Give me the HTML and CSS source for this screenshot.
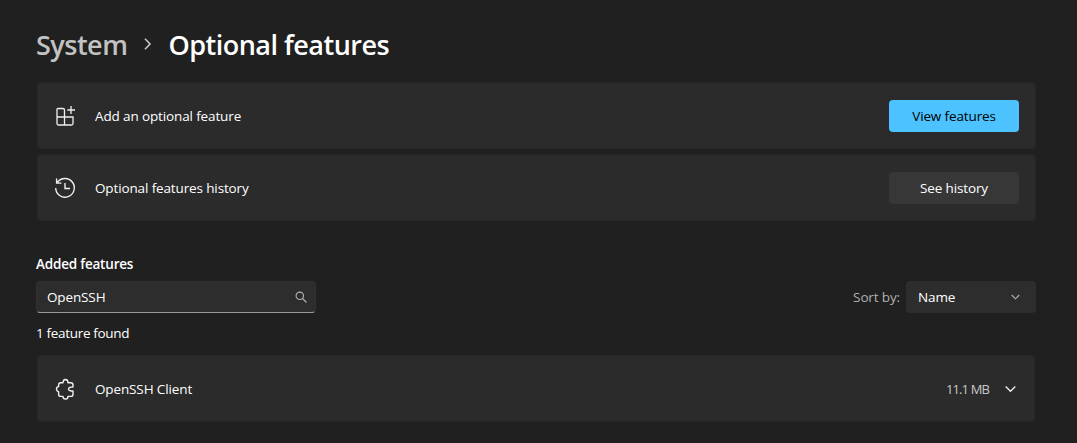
FILE: index.html
```html
<!DOCTYPE html>
<html lang="en">
<head>
<meta charset="utf-8">
<title>Optional features</title>
<link rel="stylesheet" href="styles.css">
</head>
<body>
<main class="page">
  <header class="crumbs">
    <span class="crumb-parent">System</span>
    <svg class="crumb-sep" width="12" height="14" viewBox="0 0 12 14"><path d="M3 1.800 8 7l-5 5.200" fill="none" stroke="#c8c8c8" stroke-width="1.600"/></svg>
    <span class="crumb-current">Optional features</span>
  </header>
  <section class="cards">
    <div class="card">
      <svg class="card-icon" width="22" height="22" viewBox="0 0 22 22" fill="none" stroke="#f0f0f0" stroke-width="1.300"><path d="M3.500 3.500h4.500a1.500 1.500 0 0 1 1.500 1.500v7h-7.500V4.500a1 1 0 0 1 1-1ZM9.500 12h8.500v6.500a1.500 1.500 0 0 1-1.500 1.500h-7ZM2 12h7.500v8H3.500A1.500 1.500 0 0 1 2 18.500ZM16 1v8M12.300 5h7.700"/></svg>
      <span class="card-title">Add an optional feature</span>
      <button class="btn btn-accent">View features</button>
    </div>
    <div class="card">
      <svg class="card-icon" width="22" height="22" viewBox="0 0 22 22" fill="none" stroke="#f0f0f0" stroke-width="1.400"><path d="M2.400 5.500A9.300 9.300 0 1 1 .7 11M1.600 1.500v4.600h4.800M10 6v5.500h5"/></svg>
      <span class="card-title">Optional features history</span>
      <button class="btn">See history</button>
    </div>
  </section>
  <h2 class="section-title">Added features</h2>
  <div class="toolbar">
    <div class="search">
      <span class="search-value">OpenSSH</span>
      <svg width="12" height="12" viewBox="0 0 12 12" fill="none" stroke="#b5b5b5" stroke-width="1.100"><circle cx="4.800" cy="4.800" r="3.700"/><path d="m7.500 7.500 4 4"/></svg>
    </div>
    <div class="sort">
      <span class="sort-label">Sort by:</span>
      <div class="select">
        <span class="select-value">Name</span>
        <svg width="9" height="6" viewBox="0 0 9 6" fill="none" stroke="#b5b5b5" stroke-width="1.100"><path d="m.7 1 3.800 3.800L8.300 1"/></svg>
      </div>
    </div>
  </div>
  <p class="count">1 feature found</p>
  <div class="card card-feature">
    <svg class="card-icon" width="22" height="22" viewBox="0 0 22 22" fill="none" stroke="#f0f0f0" stroke-width="1.400" stroke-linejoin="round"><path d="M8 4.800C8 2.800 9.200 1.500 10.500 1.500S13 2.800 13 4.800H15.800C17.200 4.800 18 5.600 18 7V9C15.500 8.800 13.500 9.800 13.500 11S15.500 13.200 18 13V16.200C18 17.600 17.200 18.400 15.800 18.400H13C13 20 12 21 10.500 21S8 20 8 18.400H5.800C4.400 18.400 3.600 17.600 3.600 16.200V13.600C2.400 13.600 1.500 12.400 1.500 11S2.400 8.600 3.600 8.600V7C3.600 5.600 4.400 4.800 5.800 4.800Z"/></svg>
    <span class="card-title">OpenSSH Client</span>
    <span class="size">11.1 MB</span>
    <svg class="expand" width="11" height="8" viewBox="0 0 11 8" fill="none" stroke="#f0f0f0" stroke-width="1.300"><path d="m.7 1.500 4.800 4.800 4.800-4.800"/></svg>
  </div>
</main>
</body>
</html>
```
FILE: styles.css
```css
* { box-sizing: border-box; }
html, body { margin: 0; height: 100%; overflow: hidden; }
body {
  background: #202020;
  color: #fff;
  font-family: "Open Sans", "Noto Sans", "Liberation Sans", sans-serif;
  font-size: 13.5px;
}
.page { padding: 26px 41px 0 36px; }
.crumbs { display: flex; align-items: center; height: 36px; font-size: 27px; font-weight: 600; letter-spacing: -.5px; }
.crumb-parent { color: #c2c2c2; }
.crumb-sep { margin: 0 14px 0 15px; }
.cards { display: flex; flex-direction: column; gap: 5px; margin: 20px 0 0 1px; }
.card {
  display: flex;
  align-items: center;
  height: 67px;
  padding: 0 16px 0 17px;
  background: #2b2b2b;
  border: 1px solid #262626;
  border-radius: 4px;
}
.card-icon { flex: none; width: 22px; margin-right: 18px; }
.card-title { flex: 1; letter-spacing: -.13px; }
.btn {
  width: 130px;
  height: 32px;
  border: 0;
  border-radius: 4px;
  background: #373737;
  color: #fff;
  font: inherit;
  letter-spacing: -.13px;
}
.btn-accent { background: #4cc2ff; color: #000; }
.section-title { margin: 34px 0 0; font-size: 13.5px; font-weight: 600; line-height: 18px; letter-spacing: -.2px; }
.toolbar { display: flex; justify-content: space-between; align-items: center; margin-top: 8px; }
.search {
  display: flex;
  align-items: center;
  justify-content: space-between;
  width: 280px;
  height: 32px;
  padding: 0 8px 0 10px;
  background: #2d2d2d;
  border: 1px solid #303030;
  border-bottom-color: #9a9a9a;
  border-radius: 4px;
}
.search-value, .select-value { letter-spacing: -.13px; }
.sort { display: flex; align-items: center; gap: 6px; }
.sort-label { color: #b0b0b0; letter-spacing: -.13px; }
.select {
  display: flex;
  align-items: center;
  justify-content: space-between;
  width: 130px;
  height: 32px;
  padding: 0 16px 0 12px;
  background: #2d2d2d;
  border-radius: 4px;
}
.count { margin: 11px 0 0; line-height: 18px; letter-spacing: -.32px; }
.card-feature { margin: 13px 1px 0 1px; }
.size { color: #c8c8c8; font-size: 13px; letter-spacing: -.87px; }
.expand { margin: 0 2px 0 16px; }
```
